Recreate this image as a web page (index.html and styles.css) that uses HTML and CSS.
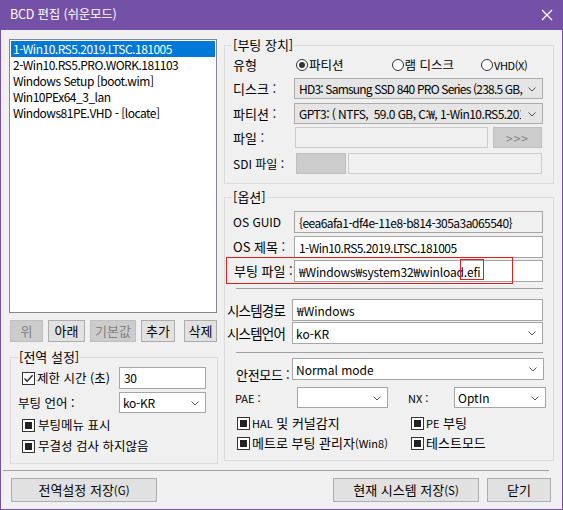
FILE: index.html
```html
<!DOCTYPE html>
<html lang="ko">
<head>
<meta charset="utf-8">
<title>BCD 편집 (쉬운모드)</title>
<link rel="stylesheet" href="styles.css">
</head>
<body>
<div class="win">
  <div class="titlebar">
    <span class="title">BCD 편집 (쉬운모드)</span>
    <svg class="close" width="12" height="12" viewBox="0 0 12 12"><path d="M1 1L11 11M11 1L1 11" stroke="#ffffff" stroke-width="1.3" fill="none"/></svg>
  </div>

  <div class="main">
    <div class="left">
      <div class="list">
        <div class="item sel">1-Win10.RS5.2019.LTSC.181005</div>
        <div class="item">2-Win10.RS5.PRO.WORK.181103</div>
        <div class="item">Windows Setup [boot.wim]</div>
        <div class="item">Win10PEx64_3_lan</div>
        <div class="item">Windows81PE.VHD - [locate]</div>
      </div>

      <div class="btnrow">
        <div class="btn dis b-up">위</div>
        <div class="btn b-down">아래</div>
        <div class="btn dis b-def">기본값</div>
        <div class="btn b-add">추가</div>
        <div class="btn b-del">삭제</div>
      </div>

      <div class="group g-global">
        <div class="glabel">[전역 설정]</div>
        <div class="row gl-r1">
          <span class="chk checked"><svg width="11" height="11" viewBox="0 0 11 11"><path d="M1.5 5.5L4.2 8.3L9.6 2.2" stroke="#222" stroke-width="1.3" fill="none"/></svg></span>
          <span class="lbl gl-timeout">제한 시간 (초)</span>
          <div class="input gl-ctl">30</div>
        </div>
        <div class="row gl-r2">
          <span class="lbl gl-lang">부팅 언어 :</span>
          <div class="combo white gl-ctl">ko-KR<svg class="chev" width="8" height="5" viewBox="0 0 8 5"><path d="M0.5 0.5L4 4L7.5 0.5" stroke="#555" fill="none"/></svg></div>
        </div>
        <div class="row gl-r3">
          <span class="chk fill"><i></i></span><span class="lbl">부팅메뉴 표시</span>
        </div>
        <div class="row gl-r4">
          <span class="chk fill"><i></i></span><span class="lbl">무결성 검사 하지않음</span>
        </div>
      </div>
    </div>

    <div class="right">
      <div class="group g-boot">
        <div class="glabel">[부팅 장치]</div>
        <div class="row bt-type">
          <span class="lbl w61">유형</span>
          <span class="radio on r1"><i></i></span><span class="rl">파티션</span>
          <span class="radio r2"><i></i></span><span class="rl">램 디스크</span>
          <span class="radio r3"><i></i></span><span class="rl small">VHD(X)</span>
        </div>
        <div class="row bt-disk">
          <span class="lbl w61">디스크 :</span>
          <div class="combo gray w249 tighter">HD3: Samsung SSD 840 PRO Series (238.5 GB,<svg class="chev" width="8" height="5" viewBox="0 0 8 5"><path d="M0.5 0.5L4 4L7.5 0.5" stroke="#555" fill="none"/></svg></div>
        </div>
        <div class="row bt-part">
          <span class="lbl w61">파티션 :</span>
          <div class="combo gray w249 tight"><span class="clip">GPT3: ( NTFS,&nbsp; 59.0 GB, C:₩, 1-Win10.RS5.2019.LTSC</span><svg class="chev" width="8" height="5" viewBox="0 0 8 5"><path d="M0.5 0.5L4 4L7.5 0.5" stroke="#555" fill="none"/></svg></div>
        </div>
        <div class="row bt-file">
          <span class="lbl w62 f13">파일 :</span>
          <div class="input dis file-in"></div>
          <div class="btn dis more">&gt;&gt;&gt;</div>
        </div>
        <div class="row bt-sdi">
          <span class="lbl w63 f12">SDI 파일 :</span>
          <div class="graybox"></div>
          <div class="input dis sdi-in"></div>
        </div>
      </div>

      <div class="group g-opt">
        <div class="glabel">[옵션]</div>
        <div class="row op-guid">
          <span class="lbl w61 f12">OS GUID</span>
          <div class="input ro w249 tight">{eea6afa1-df4e-11e8-b814-305a3a065540}</div>
        </div>
        <div class="row op-title">
          <span class="lbl w61">OS 제목 :</span>
          <div class="input w249 tight">1-Win10.RS5.2019.LTSC.181005</div>
        </div>
        <div class="row op-file">
          <span class="lbl w61 f13">부팅 파일 :</span>
          <div class="input w249 slight">₩Windows₩system32₩winload.efi</div>
          <div class="mark mark-row"></div>
          <div class="mark mark-efi"></div>
        </div>
        <div class="hsep op-sep1"></div>
        <div class="row op-sys">
          <span class="lbl w65 f14 sl">시스템경로</span>
          <div class="input w251">₩Windows</div>
        </div>
        <div class="row op-lang">
          <span class="lbl w65 f14 sl">시스템언어</span>
          <div class="combo white w251">ko-KR<svg class="chev" width="8" height="5" viewBox="0 0 8 5"><path d="M0.5 0.5L4 4L7.5 0.5" stroke="#555" fill="none"/></svg></div>
        </div>
        <div class="hsep op-sep2"></div>
        <div class="row op-safe">
          <span class="lbl f13 safe-l">안전모드 :</span>
          <div class="combo white w252">Normal mode<svg class="chev" width="8" height="5" viewBox="0 0 8 5"><path d="M0.5 0.5L4 4L7.5 0.5" stroke="#555" fill="none"/></svg></div>
        </div>
        <div class="row op-pae">
          <span class="lbl f11 pae-l">PAE :</span>
          <div class="combo white pae-c"><svg class="chev" width="8" height="5" viewBox="0 0 8 5"><path d="M0.5 0.5L4 4L7.5 0.5" stroke="#555" fill="none"/></svg></div>
          <span class="lbl f11 nx-l">NX :</span>
          <div class="combo white nx-c top">OptIn<svg class="chev" width="8" height="5" viewBox="0 0 8 5"><path d="M0.5 0.5L4 4L7.5 0.5" stroke="#555" fill="none"/></svg></div>
        </div>
        <div class="row op-c1">
          <div class="cbcell"><span class="chk fill"><i></i></span><span class="lbl cbl"><small>HAL</small> 및 커널감지</span></div>
          <div class="cbcell"><span class="chk fill"><i></i></span><span class="lbl cbl"><small>PE</small> 부팅</span></div>
        </div>
        <div class="row op-c2">
          <div class="cbcell"><span class="chk fill"><i></i></span><span class="lbl cbl">메트로 부팅 관리자<small>(Win8)</small></span></div>
          <div class="cbcell"><span class="chk fill"><i></i></span><span class="lbl cbl">테스트모드</span></div>
        </div>
      </div>
    </div>
  </div>

  <div class="sep"></div>

  <div class="foot">
    <div class="btn fb1">전역설정 저장<small>(G)</small></div>
    <div class="btn fb2">현재 시스템 저장<small>(S)</small></div>
    <div class="btn fb3">닫기</div>
  </div>
</div>
</body>
</html>
```

FILE: styles.css
```css
* { box-sizing: border-box; }
html, body { margin: 0; padding: 0; background: #ffffff; }
body {
  font-family: "Noto Sans CJK KR", "Noto Sans", sans-serif;
  font-size: 12px;
  color: #000;
}
.win {
  width: 563px;
  height: 510px;
  background: #f0f0f0;
  border: 1px solid #7450a6;
  border-top: none;
  overflow: hidden;
}
.titlebar {
  height: 30px;
  margin: 0 -1px;
  background: #7450a6;
  display: flex;
  align-items: center;
  justify-content: space-between;
  padding: 0 10px 0 10px;
}
.title {
  color: #fff;
  font-size: 12.5px;
  line-height: 16px;
  margin-top: -3px;
  letter-spacing: -0.2px;
}
.close { margin-right: 0; margin-top: -1px; }

.main {
  height: 434px;
  display: flex;
  padding-left: 8px;
}
.left { width: 210px; display: flex; flex-direction: column; }
.right { width: 330px; margin-left: 5px; display: flex; flex-direction: column; }

.list {
  margin-top: 9px;
  width: 208px;
  height: 274px;
  background: #fff;
  border: 1px solid #828790;
  padding: 1px;
}
.item {
  height: 16.1px;
  line-height: 16px;
  padding-left: 2px;
  font-size: 12px;
  letter-spacing: -0.5px;
  white-space: nowrap;
}
.item.sel { background: #0078d7; color: #fff; }

.btn {
  background: #e1e1e1;
  border: 1px solid #adadad;
  display: flex;
  align-items: center;
  justify-content: center;
  font-size: 13px;
  line-height: 16px;
  white-space: nowrap;
}
.btn.dis { background: #cccccc; border-color: #bfbfbf; color: #838383; }
.btn small { font-size: 11.5px; }
.btnrow { margin-top: 7px; height: 22px; display: flex; gap: 5px; padding-left: 1px; }
.b-up { width: 33px; }
.b-down { width: 37px; }
.b-def { width: 46px; }
.b-add { width: 34px; }
.b-del { width: 33px; margin-left: 4px; }

.group {
  position: relative;
  border: 1px solid #dcdcdc;
}
.glabel {
  position: absolute;
  top: -9px;
  left: 7px;
  background: #f0f0f0;
  padding: 0 1px;
  font-size: 13px;
  line-height: 16px;
}
.row { display: flex; align-items: center; position: relative; }
.lbl { white-space: nowrap; font-size: 13px; line-height: 16px; flex: none; }
.f11 { font-size: 11px; }
.f12 { font-size: 12px; }
.f13 { font-size: 13px; }
.f14 { font-size: 13.5px; }
.w61 { width: 61px; }
.w62 { width: 62px; }
.w63 { width: 63px; }
.w65 { width: 65px; }
.w249 { width: 249px; }
.w251 { width: 251px; }
.w252 { width: 252px; }

.input {
  height: 100%;
  background: #fff;
  border: 1px solid #a5a5a5;
  display: flex;
  align-items: center;
  padding-left: 4px;
  font-size: 12px;
  white-space: nowrap;
  overflow: hidden;
  flex: none;
}
.tight { letter-spacing: -0.55px; }
.tighter { letter-spacing: -0.8px; font-size: 11.2px; }
.slight { letter-spacing: -0.15px; }
.input.ro { background: #f0f0f0; }
.input.dis { background: #f0f0f0; border-color: #cccccc; }
.combo {
  height: 100%;
  position: relative;
  border: 1px solid #a5a5a5;
  background: #fff;
  display: flex;
  align-items: center;
  padding-left: 3px;
  font-size: 12px;
  white-space: nowrap;
  overflow: hidden;
  flex: none;
}
.combo.top { align-items: flex-start; padding-top: 1px; }
.combo.gray { background: #e5e5e5; border-color: #acacac; padding-left: 4px; }
.combo .clip { width: 222px; overflow: hidden; display: block; }
.chev { position: absolute; right: 6px; top: 50%; margin-top: -2px; }

.chk {
  width: 13px; height: 13px;
  border: 1px solid #333;
  background: #fff;
  display: inline-flex;
  align-items: center;
  justify-content: center;
  flex: none;
}
.chk.fill i { display: block; width: 7px; height: 7px; background: #222; }
.radio {
  width: 12px; height: 12px;
  border: 1px solid #333;
  border-radius: 50%;
  background: #fff;
  display: inline-flex;
  align-items: center;
  justify-content: center;
  flex: none;
}
.radio.on i { display: block; width: 6px; height: 6px; border-radius: 50%; background: #333; }
.rl { font-size: 12.5px; line-height: 16px; margin-left: 1px; }
.rl.small { font-size: 11px; letter-spacing: -0.4px; }

/* global group */
.g-global { margin-top: 15px; margin-left: 1px; width: 208px; height: 107px; padding-left: 11px; padding-top: 9px; }
.g-global .lbl { font-size: 12.5px; }
.gl-r1 { height: 22px; }
.gl-timeout { margin-left: 2px; width: 82px; }
.gl-ctl { width: 87px; margin-left: 0; letter-spacing: -0.3px; }
.gl-r1 .gl-ctl { align-items: flex-start; padding-top: 1px; }
.gl-r2 { height: 21px; margin-top: 3px; margin-left: -4px; }
.gl-lang { width: 101px; }
.gl-r3 { height: 16px; margin-top: 4px; }
.gl-r4 { height: 16px; margin-top: 5px; }
.gl-r3 .lbl, .gl-r4 .lbl { margin-left: 3px; }

/* boot group */
.g-boot { margin-top: 15px; height: 139px; padding: 11px 9px 0 8px; }
.bt-type { height: 16px; }
.bt-type .r1 { margin-left: 2px; }
.bt-type .r2 { margin-left: 48px; }
.bt-type .r3 { margin-left: 27px; }
.bt-disk { height: 21px; margin-top: 5px; }
.bt-part { height: 21px; margin-top: 4px; }
.bt-file { height: 21px; margin-top: 3px; }
.file-in { width: 193px; }
.more { width: 49px; height: 100%; margin-left: 5px; font-size: 12px; color: #a8a8a8; letter-spacing: 1px; }
.bt-sdi { height: 21px; margin-top: 5px; }
.graybox { width: 50px; height: 100%; background: #cccccc; border: 1px solid #bfbfbf; flex: none; }
.sdi-in { width: 194px; margin-left: 2px; }

/* options group */
.g-opt { margin-top: 13px; height: 264px; padding: 13px 9px 0 8px; }
.op-guid { height: 22px; }
.op-title { height: 22px; margin-top: 3px; }
.op-file { height: 22px; margin-top: 2px; }
.op-file .lbl { margin-left: 1px; width: 60px; }
.mark { position: absolute; border: 1px solid #e02020; pointer-events: none; }
.mark-row { left: -7px; top: -3px; width: 287px; height: 27px; }
.mark-efi { left: 227px; top: -1px; width: 24px; height: 21px; }
.hsep { height: 1px; background: #a0a0a0; margin-left: 3px; width: 307px; }
.op-sep1 { margin-top: 6px; }
.op-sys { height: 22px; margin-top: 10px; margin-left: -6px; }
.op-lang { height: 22px; margin-top: 1px; margin-left: -6px; }
.sl { letter-spacing: -0.8px; }
.op-sep2 { margin-top: 8px; }
.op-safe { height: 22px; margin-top: 5px; }
.safe-l { margin-left: 3px; align-self: flex-end; margin-bottom: -3px; width: 56px; letter-spacing: -0.3px; }
.op-pae { height: 21px; margin-top: 7px; }
.pae-l { width: 62px; margin-left: 2px; }
.pae-c { width: 91px; }
.nx-l { width: 46px; margin-left: 20px; }
.nx-c { width: 92px; }
.op-c1 { height: 16px; margin-top: 7px; }
.op-c2 { height: 16px; margin-top: 4px; }
.cbcell { display: flex; align-items: center; }
.cbcell:first-child { width: 174px; margin-left: 4px; }
.cbl { margin-left: 2px; font-size: 13px; }
.cbl small { font-size: 11px; }

.sep { height: 1px; background: #a0a0a0; margin: 6px 0 0 2px; width: 546px; }
.foot { display: flex; margin-top: 7px; height: 24px; padding-left: 10px; }
.fb1 { width: 146px; }
.fb2 { width: 146px; margin-left: 176px; }
.fb3 { width: 64px; margin-left: 8px; }
```
